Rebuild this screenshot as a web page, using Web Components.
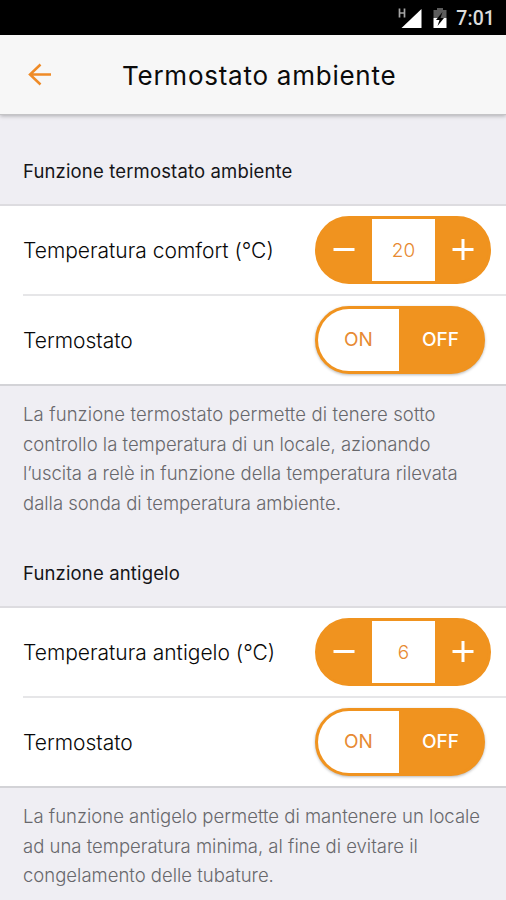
<!DOCTYPE html>
<html lang="it">
<head>
<meta charset="utf-8">
<title>Termostato ambiente</title>
<style>
  body { margin: 0; background: #efeef3; font-family: Inter, "Liberation Sans", sans-serif; }
</style>
</head>
<body>
<thermo-app></thermo-app>
<script>
class StatusBar extends HTMLElement {
  constructor() {
    super();
    this.attachShadow({ mode: 'open' });
    this.shadowRoot.innerHTML = `
      <style>
        :host { display: flex; height: 35px; box-sizing: border-box; padding: 0 11px 0 0; background: #000; justify-content: flex-end; align-items: center; color: #dcdcdc; }
        svg { display: block; }
        .signal { margin-right: 11px; }
        .battery { margin-right: 9px; }
        .time { font: 500 19.500px/24px Roboto, sans-serif; letter-spacing: 0.1px; padding-top: 2px; }
      </style>
      <svg class="signal" width="24" height="22" viewBox="0 0 24 22">
        <path d="M1.500 1.500v9M6.500 1.500v9M1.500 6h5" fill="none" stroke="#a5a5a5" stroke-width="1.700"/>
        <path d="M23.500 2v19H3.500z" fill="#fff"/>
      </svg>
      <svg class="battery" width="14" height="22" viewBox="0 0 14 22">
        <path d="M4 1h6v2h3.500v8H.500V3H4z" fill="#5c5c5c"/>
        <path d="M.500 11h13v10H.500z" fill="#fff"/>
        <path d="M9.500 5 3 13h3.500L4.500 19 11 11H7.500z" fill="#000"/>
      </svg>
      <div class="time"><slot></slot></div>
    `;
  }
}
customElements.define('status-bar', StatusBar);

class NavBar extends HTMLElement {
  constructor() {
    super();
    this.attachShadow({ mode: 'open' });
    this.shadowRoot.innerHTML = `
      <style>
        :host { display: flex; height: 80px; box-sizing: border-box; padding: 1px 0 0 28px; align-items: center; background: #f7f7f7; border-bottom: 1px solid #c4c4c6; box-shadow: 0 1px 4px rgba(0, 0, 0, 0.28); position: relative; }
        button { display: block; width: 24px; height: 24px; padding: 0; border: 0; background: none; cursor: pointer; }
        svg { display: block; }
        h1 { margin: 0 0 0 70px; padding-top: 2px; font-size: 26px; line-height: 32px; font-weight: 400; letter-spacing: 0.750px; color: #0b0b0b; white-space: nowrap; }
      </style>
      <button aria-label="Indietro">
        <svg width="24" height="24" viewBox="0 0 24 24">
          <path d="M23 11.500H2.500M12.500 1.500 2 11.500l10.500 10" fill="none" stroke="#ef8b27" stroke-width="2.500"/>
        </svg>
      </button>
      <h1><slot></slot></h1>
    `;
  }
}
customElements.define('nav-bar', NavBar);

class SettingsGroup extends HTMLElement {
  constructor() {
    super();
    this.attachShadow({ mode: 'open' });
    this.shadowRoot.innerHTML = `
      <style>
        :host { display: block; height: 402px; }
        h2 { margin: 0; box-sizing: border-box; height: 89px; padding: 44px 0 0 23px; font-size: 18.500px; line-height: 24px; font-weight: 400; letter-spacing: 0.150px; color: #151518; white-space: nowrap; }
        .list { background: #fff; border-top: 2px solid #dddce0; border-bottom: 2px solid #d3d3d7; }
        .note { margin: 0; padding: 14px 20px 0 23px; font-size: 18.500px; line-height: 29.600px; font-weight: 300; color: #68686c; white-space: nowrap; }
      </style>
      <h2></h2>
      <div class="list"><slot></slot></div>
      <p class="note"><slot name="note"></slot></p>
    `;
  }
  connectedCallback() {
    this.shadowRoot.querySelector('h2').textContent = this.getAttribute('heading');
  }
}
customElements.define('settings-group', SettingsGroup);

class SettingsRow extends HTMLElement {
  constructor() {
    super();
    this.attachShadow({ mode: 'open' });
    this.shadowRoot.innerHTML = `
      <style>
        :host { display: block; padding-left: 23px; }
        .inner { display: grid; grid-template-columns: 292px auto; justify-content: start; align-items: center; box-sizing: border-box; height: 88px; }
        :host([divider]) .inner { height: 90px; border-bottom: 2px solid #e6e6e8; }
        .label { font-size: 21px; line-height: 28px; padding-top: 1px; font-weight: 300; color: #080808; white-space: nowrap; }
      </style>
      <div class="inner">
        <div class="label"></div>
        <slot></slot>
      </div>
    `;
  }
  connectedCallback() {
    this.shadowRoot.querySelector('.label').textContent = this.getAttribute('label');
  }
}
customElements.define('settings-row', SettingsRow);

class NumberStepper extends HTMLElement {
  constructor() {
    super();
    this.attachShadow({ mode: 'open' });
    this.shadowRoot.innerHTML = `
      <style>
        :host { display: grid; grid-template-columns: 54px 63px 53px; width: 176px; height: 68px; box-sizing: border-box; border: 3px solid #f0931f; border-radius: 34px; background: #f0931f; overflow: hidden; }
        button { display: grid; place-items: center; padding: 0; border: 0; background: #f0931f; cursor: pointer; }
        #minus { padding-right: 2px; }
        #plus { padding-left: 2px; }
        svg { display: block; }
        .value { display: grid; place-items: center; background: #fff; color: #e78a32; font-size: 19px; line-height: 24px; font-weight: 300; padding-top: 2px; }
      </style>
      <button id="minus" aria-label="Diminuisci">
        <svg width="22" height="22" viewBox="0 0 22 22"><path d="M.500 10.500h21" stroke="#fff" stroke-width="3"/></svg>
      </button>
      <div class="value" id="value"></div>
      <button id="plus" aria-label="Aumenta">
        <svg width="22" height="22" viewBox="0 0 22 22"><path d="M.500 10.500h21M11 0v21" stroke="#fff" stroke-width="3"/></svg>
      </button>
    `;
    this._value = Number(this.getAttribute('value') || 0);
    this._output = this.shadowRoot.getElementById('value');
  }
  connectedCallback() {
    this._render();
    this.shadowRoot.getElementById('minus').onclick = () => this._step(-1);
    this.shadowRoot.getElementById('plus').onclick = () => this._step(1);
  }
  _step(delta) {
    this._value += delta;
    this._render();
  }
  _render() {
    this._output.textContent = this._value;
  }
}
customElements.define('number-stepper', NumberStepper);

class OnOffSwitch extends HTMLElement {
  constructor() {
    super();
    this.attachShadow({ mode: 'open' });
    this.shadowRoot.innerHTML = `
      <style>
        :host { display: grid; grid-template-columns: 81px 83px; width: 170px; height: 68px; box-sizing: border-box; border: 3px solid #f0931f; border-radius: 34px; background: #f0931f; overflow: hidden; box-shadow: 0 1px 3px rgba(0, 0, 0, 0.28); }
        button { padding: 0; border: 0; background: #fff; color: #e78a32; font: 400 19px/24px Inter, sans-serif; cursor: pointer; }
        button.active { background: #f0931f; color: #fff; font-weight: 500; }
      </style>
      <button data-state="on">ON</button>
      <button data-state="off">OFF</button>
    `;
    this._buttons = this.shadowRoot.querySelectorAll('button');
  }
  connectedCallback() {
    this._select(this.getAttribute('state') || 'off');
    this._buttons.forEach(b => b.addEventListener('click', () => this._select(b.dataset.state)));
  }
  _select(state) {
    this._buttons.forEach(b => b.classList.toggle('active', b.dataset.state === state));
  }
}
customElements.define('on-off-switch', OnOffSwitch);

class ThermoApp extends HTMLElement {
  constructor() {
    super();
    this.attachShadow({ mode: 'open' });
    this.shadowRoot.innerHTML = `
      <style>
        :host { display: block; height: 900px; overflow: hidden; background: #efeef3; }
        .loose { letter-spacing: 0.110px; }
      </style>
      <status-bar>7:01</status-bar>
      <nav-bar>Termostato ambiente</nav-bar>
      <settings-group heading="Funzione termostato ambiente">
        <settings-row label="Temperatura comfort (°C)" divider><number-stepper value="20"></number-stepper></settings-row>
        <settings-row label="Termostato"><on-off-switch state="off"></on-off-switch></settings-row>
        <span slot="note"><span class="loose">La funzione termostato permette di tenere sotto</span><br>controllo la temperatura di un locale, azionando<br>l’uscita a relè in funzione della temperatura rilevata<br>dalla sonda di temperatura ambiente.</span>
      </settings-group>
      <settings-group heading="Funzione antigelo">
        <settings-row label="Temperatura antigelo (°C)" divider><number-stepper value="6"></number-stepper></settings-row>
        <settings-row label="Termostato"><on-off-switch state="off"></on-off-switch></settings-row>
        <span slot="note">La funzione antigelo permette di mantenere un locale<br>ad una temperatura minima, al fine di evitare il<br>congelamento delle tubature.</span>
      </settings-group>
    `;
  }
}
customElements.define('thermo-app', ThermoApp);
</script>
</body>
</html>
